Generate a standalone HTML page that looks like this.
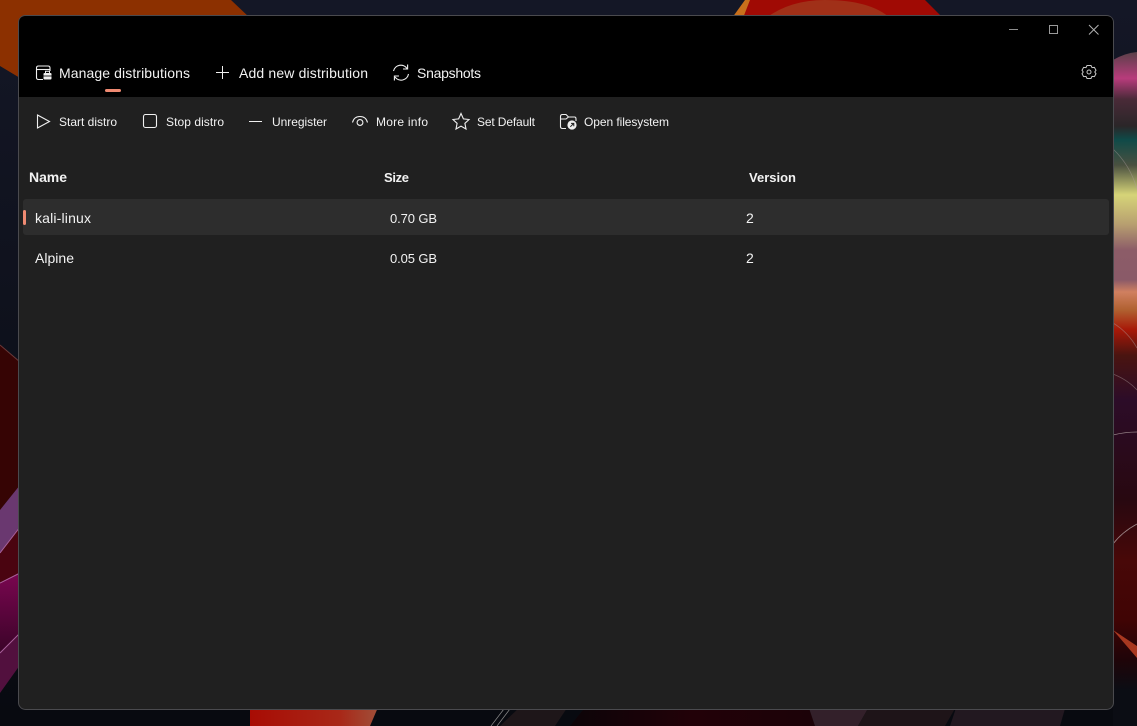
<!DOCTYPE html>
<html><head><meta charset="utf-8"><title>WSL Manager</title>
<style>
html,body{margin:0;padding:0;background:#0b0d14;width:1137px;height:726px;overflow:hidden}
svg{display:block;position:absolute;left:0;top:0}
text{font-family:"Liberation Sans",sans-serif;fill:#f2f2f2}
.t{font-size:14px}.b{font-size:12px}.h{font-size:13px;font-weight:bold}.r{font-size:14px}.n{font-size:13px}
.i{fill:none;stroke:#f0f0f0;stroke-width:1.1}
</style></head><body>
<svg width="1137" height="726" viewBox="0 0 1137 726" xmlns="http://www.w3.org/2000/svg">
<defs>
<linearGradient id="rg" x1="0" y1="0" x2="0" y2="1">
<stop offset="0" stop-color="#5a4048"/><stop offset=".039" stop-color="#b83c7c"/><stop offset=".07" stop-color="#4a2a38"/><stop offset=".11" stop-color="#2a2628"/><stop offset=".13" stop-color="#0f4a48"/><stop offset=".168" stop-color="#4a5040"/><stop offset=".212" stop-color="#d6d478"/><stop offset=".255" stop-color="#b8a070"/><stop offset=".294" stop-color="#8c5c68"/><stop offset=".338" stop-color="#8a5a68"/><stop offset=".356" stop-color="#d08060"/><stop offset=".383" stop-color="#b06030"/><stop offset=".412" stop-color="#a81808"/><stop offset=".45" stop-color="#4a1410"/><stop offset=".516" stop-color="#2c0c28"/><stop offset=".665" stop-color="#280810"/><stop offset=".754" stop-color="#480808"/><stop offset=".843" stop-color="#400404"/><stop offset=".9" stop-color="#200408"/><stop offset=".947" stop-color="#0b0d14"/><stop offset="1" stop-color="#0b0d14"/>
</linearGradient>
<linearGradient id="bg" x1="0" y1="0" x2="0" y2="1"><stop offset="0" stop-color="#141726"/><stop offset="1" stop-color="#080a10"/></linearGradient>
<linearGradient id="red" x1="0" y1="0" x2="1" y2="0"><stop offset="0" stop-color="#a80c04"/><stop offset=".7" stop-color="#a82818"/><stop offset="1" stop-color="#a0503a"/></linearGradient>
<linearGradient id="mag" x1="0" y1="0" x2="0" y2="1"><stop offset="0" stop-color="#7a0650"/><stop offset="1" stop-color="#3a0428"/></linearGradient>
<linearGradient id="mar" x1="0" y1="0" x2="1" y2="0"><stop offset="0" stop-color="#0c0408"/><stop offset=".5" stop-color="#220108"/><stop offset="1" stop-color="#1c0208"/></linearGradient>
</defs>
<rect width="1137" height="726" fill="url(#bg)"/>
<!-- wallpaper top -->
<polygon points="0,0 231,0 250,18 20,18 20,78 0,66" fill="#8c3000"/>
<polygon points="732,18 745,0 752,0 745,18" fill="#c8701c"/>
<polygon points="750,0 925,0 943,18 743,18" fill="#a00a04"/>
<path d="M766,18 Q790,0 825,0 Q870,0 890,18Z" fill="#a03018"/>
<!-- wallpaper left -->
<polygon points="0,345 20,362 20,485 0,510" fill="#360404"/>
<polygon points="0,510 20,485 20,527 0,553" fill="#6a3870"/>
<polygon points="0,553 20,527 20,573 0,583" fill="#4a0410"/>
<polygon points="0,583 20,573 20,633 0,653" fill="url(#mag)"/>
<polygon points="0,653 20,633 20,665 0,693" fill="#52103e"/>
<path d="M0,345 L20,362" stroke="#6a3a3a" stroke-width="1"/>
<path d="M0,553 L20,527 M0,583 L20,573 M0,653 L20,633" stroke="#a8609a" stroke-width="1"/>
<!-- wallpaper right -->
<path d="M1113,60 Q1125,53 1137,52 L1137,726 L1113,726Z" fill="url(#rg)"/>
<path d="M1113,149 Q1130,165 1137,189 M1113,323 Q1128,332 1137,348 M1113,374 Q1128,380 1137,390" stroke="#b0a0a0" stroke-opacity=".45" stroke-width=".8" fill="none"/>
<path d="M1113,435 Q1125,432 1137,432 M1113,544 Q1122,532 1137,524" stroke="#b0a0a0" stroke-opacity=".8" stroke-width=".8" fill="none"/>
<polygon points="1113,630 1137,646 1137,658" fill="#a83820"/>
<!-- wallpaper bottom -->
<polygon points="250,705 379,705 370,726 250,726" fill="url(#red)"/>
<polygon points="522,705 569,705 555,726 500,726" fill="#1e1619"/>
<path d="M507,705 L491,726 M513,705 L497,726" stroke="#8a8a8a" stroke-width=".7"/>
<polygon points="587,705 808,705 815,726 570,726" fill="url(#mar)"/>
<polygon points="808,705 870,705 858,726 815,726" fill="#33202a"/>
<polygon points="870,705 957,705 945,726 858,726" fill="#1e1418"/>
<polygon points="957,705 1066,705 1060,726 950,726" fill="#221820"/>
<!-- window -->
<rect x="18.5" y="15.5" width="1095" height="694" rx="7" fill="#202020" stroke="#4a4a4e"/>
<path d="M19,97 V23 Q19,16 26,16 H1106 Q1113,16 1113,23 V97Z" fill="#000"/>
<!-- window controls -->
<path d="M1009,29.5 H1018" stroke="#8e8e8e" fill="none"/>
<rect x="1049.5" y="25.5" width="8" height="8" stroke="#9a9a9a" fill="none"/>
<path d="M1089,25 L1098.5,34.5 M1098.5,25 L1089,34.5" stroke="#b0b0b0" fill="none"/>
<!-- gear -->
<g fill="none" stroke="#c8c8c8" stroke-width="1"><path d="M1087,65.5 L1091,65.5 L1092,67.6 L1094.4,67.4 L1096,70.2 L1094.8,72 L1096,73.8 L1094.4,76.6 L1092,76.4 L1091,78.5 L1087,78.5 L1086,76.4 L1083.6,76.6 L1082,73.8 L1083.2,72 L1082,70.2 L1083.6,67.4 L1086,67.6Z"/><circle cx="1089" cy="72" r="2"/></g>
<!-- tabs -->
<path d="M43,79.5 H38.5 Q36.5,79.5 36.5,77.5 V68 Q36.5,66 38.5,66 H48 Q50,66 50,68 V71" class="i"/>
<path d="M36.5,69.5 H50" class="i"/>
<rect x="43.5" y="73" width="8" height="6.5" rx="1" fill="#f0f0f0"/>
<path d="M45.5,73 V71.3 H49.5 V73" fill="none" stroke="#f0f0f0"/>
<path d="M43.5,76 H51.5" stroke="#000" stroke-width=".8"/>
<text class="t" x="59" y="78" textLength="131" lengthAdjust="spacing">Manage distributions</text>
<rect x="105" y="89" width="16" height="3" rx="1.5" fill="#ef8a72"/>
<path d="M222.5,66 V79 M216,72.5 H229" stroke="#f0f0f0" fill="none"/>
<text class="t" x="239" y="78" textLength="129" lengthAdjust="spacing">Add new distribution</text>
<path d="M393.5,71 A7.5,7.5 0 0 1 407,68.5" class="i"/><path d="M407.6,64.5 V69 H403" class="i"/>
<path d="M408.5,74 A7.5,7.5 0 0 1 395,77" class="i"/><path d="M394.4,80.5 V76 H399" class="i"/>
<text class="t" x="417" y="78" textLength="64" lengthAdjust="spacing">Snapshots</text>
<!-- toolbar -->
<path d="M37.5,115 L49.5,121.5 L37.5,128Z" class="i"/>
<text class="b" x="59" y="126" textLength="58" lengthAdjust="spacing">Start distro</text>
<rect x="143.5" y="114.5" width="13" height="13" rx="2" class="i"/>
<text class="b" x="166" y="126" textLength="58" lengthAdjust="spacing">Stop distro</text>
<path d="M249,121.5 H262" stroke="#f0f0f0" fill="none"/>
<text class="b" x="272" y="126" textLength="55" lengthAdjust="spacing">Unregister</text>
<path d="M352.5,122.5 Q354,116.5 360,116.5 Q366,116.5 367.5,122.5" class="i"/><circle cx="360" cy="122.5" r="2.9" class="i"/>
<text class="b" x="376" y="126" textLength="52" lengthAdjust="spacing">More info</text>
<path d="M461,113.5 L463.4,118.9 L469,119.5 L464.9,123.3 L466,129 L461,126.1 L456,129 L457.1,123.3 L453,119.5 L458.6,118.9Z" class="i"/>
<text class="b" x="477" y="126" textLength="58" lengthAdjust="spacing">Set Default</text>
<path d="M566,128.5 H562.5 Q560.5,128.5 560.5,126.5 V116.5 Q560.5,114.5 562.5,114.5 H566 L568.5,117 H574.5 Q576,117 576,119 V121" class="i"/>
<path d="M560.5,119 H566 L568.5,117" class="i"/>
<circle cx="572" cy="125" r="4.6" fill="#f0f0f0"/>
<path d="M570.3,126.8 L573.5,123.6 M571,123.4 H573.8 V126.2" stroke="#202020" stroke-width="1" fill="none"/>
<text class="b" x="584" y="126" textLength="85" lengthAdjust="spacing">Open filesystem</text>
<!-- headers -->
<text class="h" style="font-size:14px" x="29" y="182" textLength="38" lengthAdjust="spacing">Name</text>
<text class="h" x="384" y="182" textLength="25" lengthAdjust="spacing">Size</text>
<text class="h" x="749" y="182" textLength="47" lengthAdjust="spacing">Version</text>
<!-- rows -->
<rect x="23" y="199" width="1086" height="36" rx="3" fill="#2d2d2d"/>
<rect x="23" y="210" width="3" height="15" rx="1.5" fill="#ef8a72"/>
<text class="r" x="35" y="223" textLength="56" lengthAdjust="spacing">kali-linux</text>
<text class="n" x="390" y="223" textLength="47" lengthAdjust="spacing">0.70 GB</text>
<text class="r" x="746" y="223">2</text>
<text class="r" x="35" y="263" textLength="39" lengthAdjust="spacing">Alpine</text>
<text class="n" x="390" y="263" textLength="47" lengthAdjust="spacing">0.05 GB</text>
<text class="r" x="746" y="263">2</text>
</svg>
</body></html>
